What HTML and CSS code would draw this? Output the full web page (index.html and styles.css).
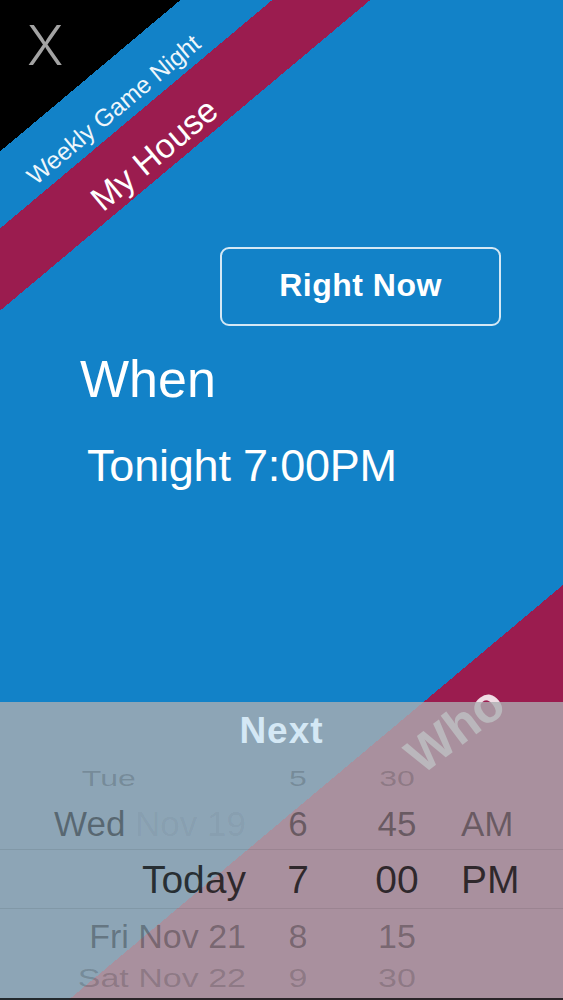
FILE: index.html
```html
<!DOCTYPE html>
<html lang="en">
<head>
  <meta charset="UTF-8">
  <meta name="viewport" content="width=device-width, initial-scale=1.0">
  <title>Weekly Game Night</title>
  <link rel="stylesheet" href="styles.css">
</head>
<body>
  <div class="screen">
    <button class="close-btn" type="button">X</button>
    <div class="ribbon-title">Weekly Game Night</div>
    <div class="ribbon-place">My House</div>

    <section class="when">
      <button class="now-btn" type="button">Right Now</button>
      <h2 class="when-label">When</h2>
      <p class="when-value">Tonight 7:00PM</p>
    </section>

    <div class="who-tab">Who</div>

    <section class="picker">
      <div class="next">Next</div>
      <div class="row row-top">
        <span class="day">Tue <span class="dim">Nov 18</span></span>
        <span class="hour">5</span>
        <span class="min">30</span>
        <span class="ampm"></span>
      </div>
      <div class="row row-near">
        <span class="day">Wed <span class="dim">Nov 19</span></span>
        <span class="hour">6</span>
        <span class="min">45</span>
        <span class="ampm">AM</span>
      </div>
      <div class="row row-current">
        <span class="day">Today</span>
        <span class="hour">7</span>
        <span class="min">00</span>
        <span class="ampm">PM</span>
      </div>
      <div class="row row-after">
        <span class="day">Fri Nov 21</span>
        <span class="hour">8</span>
        <span class="min">15</span>
        <span class="ampm"></span>
      </div>
      <div class="row row-bottom">
        <span class="day">Sat Nov 22</span>
        <span class="hour">9</span>
        <span class="min">30</span>
        <span class="ampm"></span>
      </div>
    </section>
  </div>
</body>
</html>
```

FILE: styles.css
```css
body {
  margin: 0;
  font-family: "Liberation Sans", Arial, sans-serif;
}
.screen {
  position: relative;
  display: flex;
  flex-direction: column;
  height: 1000px;
  overflow: hidden;
  color: #fff;
  background: linear-gradient(140deg,
    #000 0 116px,
    #1282c8 116px 175px,
    #9b1c4f 175px 238px,
    #1282c8 238px 810px,
    #9b1c4f 810px);
}
.close-btn {
  align-self: flex-start;
  margin: 17px 0 0 27px;
  padding: 0;
  height: 56px;
  border: none;
  background: none;
  font-family: Inter, "Liberation Sans", sans-serif;
  font-weight: 300;
  font-size: 55px;
  line-height: 56px;
  color: #a3a3a3;
}
.ribbon-title,
.ribbon-place,
.who-tab {
  position: absolute;
  white-space: nowrap;
  line-height: 1;
}
.ribbon-title {
  left: 114px;
  top: 110px;
  font-size: 24.5px;
  color: #eef6fb;
  transform: translate(-50%, -50%) rotate(-40deg);
}
.ribbon-place {
  left: 154px;
  top: 154px;
  font-size: 34px;
  transform: translate(-50%, -50%) rotate(-40deg);
}
.who-tab {
  left: 455px;
  top: 729px;
  font-size: 50px;
  font-weight: 700;
  color: rgba(255, 255, 255, 0.85);
  transform: translate(-50%, -50%) rotate(-37deg);
}

.when {
  display: flex;
  flex-direction: column;
  padding-left: 80px;
}
.now-btn {
  align-self: flex-end;
  margin: 174px 62px 0 0;
  width: 281px;
  height: 79px;
  padding: 0 0 2px;
  border: 2px solid rgba(255, 255, 255, 0.82);
  border-radius: 9px;
  background: none;
  color: #fff;
  font-family: "Liberation Sans", Arial, sans-serif;
  font-weight: 700;
  font-size: 32px;
  letter-spacing: 0.5px;
}
.when-label {
  margin: 27px 0 0;
  font-size: 52px;
  line-height: 52px;
  font-weight: 400;
}
.when-value {
  margin: 38px 0 0 7px;
  font-size: 45px;
  line-height: 45px;
  letter-spacing: -0.2px;
}

.picker {
  position: relative;
  z-index: 1;
  margin-top: auto;
  background: rgba(172, 174, 178, 0.8);
  border-bottom: 2px solid rgba(0, 0, 0, 0.75);
}
.next {
  height: 58px;
  line-height: 58px;
  text-align: center;
  font-size: 37px;
  font-weight: 700;
  letter-spacing: 1px;
  color: #d4e8f5;
}
.row {
  display: grid;
  grid-template-columns: 246px 104px 94px 1fr;
  align-items: center;
  line-height: 1;
  box-sizing: border-box;
}
.day {
  text-align: right;
  white-space: nowrap;
}
.hour,
.min {
  text-align: center;
}
.ampm {
  padding-left: 17px;
}
.row-top {
  height: 38px;
  font-size: 32px;
  color: rgba(0, 0, 0, 0.17);
  transform: scaleY(0.68);
}
.row-top .dim {
  color: rgba(0, 0, 0, 0.015);
}
.row-near {
  height: 51px;
  font-size: 35px;
  color: rgba(0, 0, 0, 0.38);
}
.row-near .dim {
  color: rgba(0, 0, 0, 0.05);
}
.row-current {
  height: 60px;
  font-size: 39px;
  color: rgba(0, 0, 0, 0.72);
  border-top: 1px solid rgba(0, 0, 0, 0.08);
  border-bottom: 1px solid rgba(0, 0, 0, 0.08);
}
.row-after {
  height: 53px;
  font-size: 34px;
  color: rgba(0, 0, 0, 0.3);
}
.row-bottom {
  height: 36px;
  font-size: 34px;
  color: rgba(0, 0, 0, 0.17);
  transform: translateY(-2px) scaleY(0.75);
}
```
